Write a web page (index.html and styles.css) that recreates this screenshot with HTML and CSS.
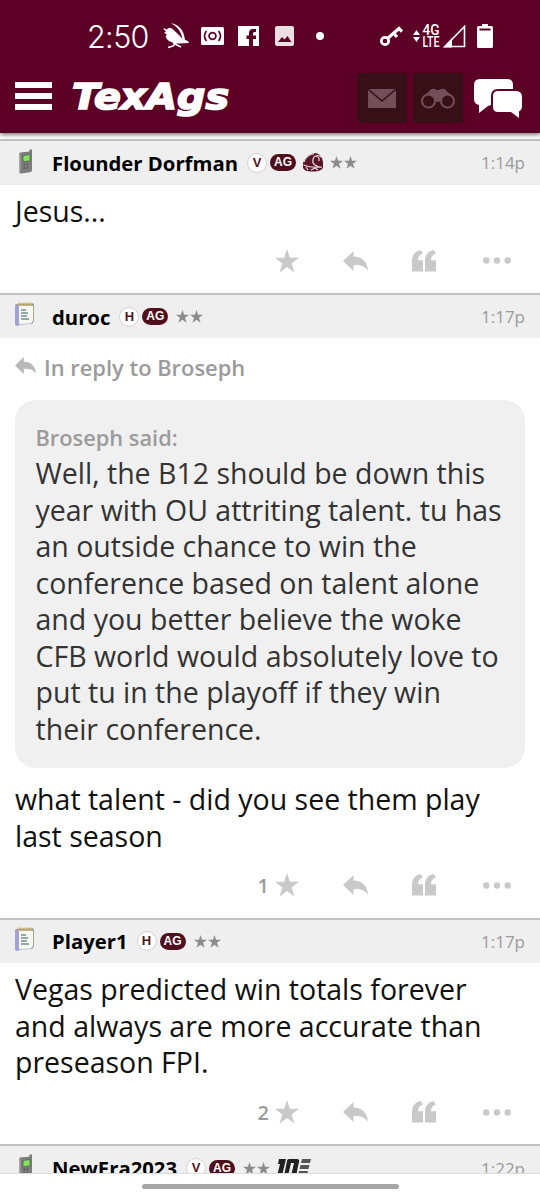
FILE: index.html
```
<!DOCTYPE html>
<html lang="en">
<head>
    <meta charset="UTF-8">
    <meta name="viewport" content="width=device-width, initial-scale=1.0">
    <title>TexAgs</title>
    <link rel="stylesheet" href="styles.css">
</head>
<body>

<!-- Shared icons -->
<svg class="sprite" width="0" height="0">
    <defs>
        <symbol id="star" viewBox="0 0 24 24">
            <path d="M12 0l2.900 8.800H24l-7.400 5.600 2.900 9.200-7.500-5.600-7.500 5.600 2.900-9.200L0 8.800h9.100z"/>
        </symbol>
        <symbol id="reply" viewBox="0 0 25 20">
            <path d="M0 10L10.500 0v5.500C19 5.500 24 10.500 25 19.500C21.500 14.800 17 13.600 10.500 14v6z"/>
        </symbol>
        <symbol id="quote" viewBox="0 0 24 22">
            <path d="M8.500 0L11 3.500C7.500 4.500 6 7 6 10.200H11V21.500H0V11.500C0 5.500 2.500 1.500 8.500 0zM21.500 0L24 3.500C20.500 4.500 19 7 19 10.200H24V21.500H13V11.500C13 5.500 15.500 1.500 21.500 0z"/>
        </symbol>
        <symbol id="dots" viewBox="0 0 28 7">
            <circle cx="3.300" cy="3.500" r="3.200"/><circle cx="14" cy="3.500" r="3.200"/><circle cx="24.700" cy="3.500" r="3.200"/>
        </symbol>
        <symbol id="phone" viewBox="0 0 16 25">
            <path d="M11.500 1q1.500-1.500 2.500 0V8h-2.500z" fill="#777"/>
            <path d="M2 3.500L12 2.500q2 0 2 2V21q0 2-2 2.300L3 24.500q-2 0-2-2V6q0-2 1-2.500z" fill="#7d7d7d"/>
            <path d="M2.500 4v19.500L1 22V6z" fill="#aaa"/>
            <path d="M5 6.500L12 5.500V12l-7 .8z" fill="#83e35c" stroke="#555" stroke-width=".7"/>
            <path d="M5.500 14.500h1.500v2H5.500zM8.500 14.300H10v2H8.500zM5.500 18H7v2H5.500zM8.500 17.800H10v2H8.500z" fill="#585858"/>
        </symbol>
        <symbol id="notepad" viewBox="0 0 20 26">
            <path d="M1 3L18 2.500q1 0 1 1V20l-2 3-11 .5L2 25Q0 25 0 23V5q0-2 1-2z" fill="#a3a1d2"/>
            <path d="M4 4h14v16L16 22.500 4 23z" fill="#f8f9f5"/>
            <path d="M2.500 2.500h15.500v2.300H2.500z" fill="#a99764"/>
            <path d="M4 1v4M7 1v4M10 1v4M13 1v4M16 1v4" stroke="#d5c28c" stroke-width="1"/>
            <path d="M6 9h5M6 12h7M6 15h6M6 18h8" stroke="#6f9089" stroke-width="1.300"/>
            <path d="M18.500 4v16l-2 3" fill="none" stroke="#aaa58e" stroke-width="1"/>
        </symbol>
    </defs>
</svg>

<div class="screen">
    <header class="top">
        <div class="status">
            <span class="clock">2:50</span>
            <svg class="bird" width="26" height="26" viewBox="0 0 26 26">
                <path d="M0 5L4 6.500Q6 3.500 9 5.500L16 12L19.500 16L25 18L26 20L16 20.500Q10 20.500 6 18Q3 16 2.500 13L4 12L1 9.500L3 9z" fill="#fff"/>
                <path d="M8 0C17 2 21 8 22 17L19.500 17C18.500 10 16 5 8 0z" fill="#fff"/>
                <path d="M14 19l-4 4-5 1.500M10 20l8 4" fill="none" stroke="#fff" stroke-width="1.500"/>
            </svg>
            <svg class="cast" width="23" height="18" viewBox="0 0 23 18">
                <rect width="23" height="18" rx="1.500" fill="#fff"/>
                <circle cx="11.500" cy="9" r="3.400" fill="none" stroke="#5c0025" stroke-width="1.800"/>
                <path d="M5.500 4q-4 5 0 10M17.500 4q4 5 0 10" fill="none" stroke="#5c0025" stroke-width="1.700"/>
            </svg>
            <svg class="facebook" width="21" height="20" viewBox="0 0 21 20">
                <path d="M0 0h21v20h-6v-7h3v-3.500h-3V7.500q0-1.500 1.500-1.500H18V3h-3q-4 0-4 4v2.500H8.500V13H11v7H0z" fill="#fff"/>
            </svg>
            <svg class="photo" width="19" height="20" viewBox="0 0 19 20">
                <rect width="19" height="20" rx="2" fill="#ebdfe4"/>
                <path d="M3 16l4-5 2.500 2.500L12.500 10l4 6z" fill="#5c0025"/>
            </svg>
            <span class="dot"></span>
            <svg class="key" width="23" height="21" viewBox="0 0 23 21">
                <circle cx="5" cy="15" r="3.700" fill="none" stroke="#fff" stroke-width="2.800"/>
                <path d="M8 12L19 2.500l3 3M14 7.500l3 3.500" fill="none" stroke="#fff" stroke-width="3.200"/>
            </svg>
            <svg class="updown" width="7" height="12" viewBox="0 0 7 12">
                <path d="M0 5l3.500-5L7 5zM0 7h7l-3.500 5z" fill="#fff"/>
            </svg>
            <svg class="lte" width="18" height="24" viewBox="0 0 18 24">
                <text x="0.500" y="11.200" textLength="17" lengthAdjust="spacingAndGlyphs">4G</text>
                <text x="0.500" y="22.800" textLength="17" lengthAdjust="spacingAndGlyphs">LTE</text>
            </svg>
            <svg class="signal" width="23" height="23" viewBox="0 0 23 23">
                <path d="M2 21.500L21.500 1.500v20z" fill="none" stroke="#fff" stroke-width="1.600"/>
                <path d="M0 22.500L9 13v9.500z" fill="#fff"/>
            </svg>
            <svg class="battery" width="16" height="24" viewBox="0 0 16 24">
                <path d="M5 0h6v2h3.500Q16 2 16 3.500v19q0 1.500-1.500 1.500h-13Q0 24 0 22.500v-19Q0 2 1.500 2H5z" fill="#fff"/>
                <path d="M2.500 4.500h11v2h-11z" fill="#5c0025"/>
            </svg>
        </div>

        <nav class="navbar">
            <div class="menu"><span></span><span></span><span></span></div>
            <svg class="logo" width="158" height="38" viewBox="0 0 158 38">
                <text x="-1" y="30" textLength="157" lengthAdjust="spacingAndGlyphs">TexAgs</text>
            </svg>
            <div class="nav-button">
                <svg width="28" height="19" viewBox="0 0 28 19">
                    <path d="M1 0h26L14 11zM0 1l14 12L28 1v18H0z"/>
                </svg>
            </div>
            <div class="nav-button">
                <svg width="34" height="21" viewBox="0 0 34 21">
                    <g class="lens"><circle cx="7.500" cy="13" r="6.500"/><circle cx="26.500" cy="13" r="6.500"/></g>
                    <path d="M4 7L10.500 1q3-1 5 1h3q2-2 5-1L30 7q-7-1-9.500 3-.5 4-3.500 4t-3.500-4Q11 6 4 7z"/>
                </svg>
            </div>
            <svg class="chat" width="48" height="39" viewBox="0 0 48 39">
                <path d="M6 0h27q6 0 6 6v4H24q-7 0-7 7v9l-3 1-9 7V26Q0 25 0 20V6Q0 0 6 0z"/>
                <path d="M24 12h18q6 0 6 6v9q0 4-3 5.500V39l-8-6H24q-5 0-5-5V17q0-5 5-5z"/>
            </svg>
        </nav>
    </header>

    <main class="feed">
        <article class="post">
            <div class="post-head">
                <svg class="device phone"><use href="#phone"/></svg>
                <span class="name">Flounder Dorfman</span>
                <span class="round">V</span><span class="pill">AG</span>
                <svg class="ring" width="21" height="19" viewBox="0 0 21 19">
                    <path d="M1 10Q5 0 14 0q6 2 7 9v6q-3 4-10 3.500Q3 19 1 15z" fill="#591629"/>
                    <path d="M2 9Q5 1 12 1M12 4q4-3 7 0M12 4q-3 5 1 8t7 2M1.500 12q7 3 18 2M4 14l2 3M9 17l4-2 3 2M13 3q5 0 4 5" fill="none" stroke="#ead9de" stroke-width="1.200"/>
                </svg>
                <span class="stars"><svg><use href="#star"/></svg><svg><use href="#star"/></svg></span>
                <span class="time">1:14p</span>
            </div>
            <p class="text">Jesus...</p>
            <div class="actions">
                <span class="count"></span>
                <svg class="like"><use href="#star"/></svg>
                <svg class="answer"><use href="#reply"/></svg>
                <svg class="cite"><use href="#quote"/></svg>
                <svg class="more"><use href="#dots"/></svg>
            </div>
        </article>

        <article class="post">
            <div class="post-head">
                <svg class="device"><use href="#notepad"/></svg>
                <span class="name">duroc</span>
                <span class="round">H</span><span class="pill">AG</span>
                <span class="stars"><svg><use href="#star"/></svg><svg><use href="#star"/></svg></span>
                <span class="time">1:17p</span>
            </div>
            <div class="reply-to">
                <svg><use href="#reply"/></svg>
                <span>In reply to Broseph</span>
            </div>
            <blockquote>
                <cite>Broseph said:</cite>
                <p>Well, the B12 should be down this<br>year with OU attriting talent. tu has<br>an outside chance to win the<br>conference based on talent alone<br>and you better believe the woke<br>CFB world would absolutely love to<br>put tu in the playoff if they win<br>their conference.</p>
            </blockquote>
            <p class="text after-quote">what talent - did you see them play<br>last season</p>
            <div class="actions">
                <span class="count">1</span>
                <svg class="like"><use href="#star"/></svg>
                <svg class="answer"><use href="#reply"/></svg>
                <svg class="cite"><use href="#quote"/></svg>
                <svg class="more"><use href="#dots"/></svg>
            </div>
        </article>

        <article class="post">
            <div class="post-head">
                <svg class="device"><use href="#notepad"/></svg>
                <span class="name">Player1</span>
                <span class="round">H</span><span class="pill">AG</span>
                <span class="stars"><svg><use href="#star"/></svg><svg><use href="#star"/></svg></span>
                <span class="time">1:17p</span>
            </div>
            <p class="text">Vegas predicted win totals forever<br>and always are more accurate than<br>preseason FPI.</p>
            <div class="actions">
                <span class="count">2</span>
                <svg class="like"><use href="#star"/></svg>
                <svg class="answer"><use href="#reply"/></svg>
                <svg class="cite"><use href="#quote"/></svg>
                <svg class="more"><use href="#dots"/></svg>
            </div>
        </article>

        <article class="post">
            <div class="post-head">
                <svg class="device phone"><use href="#phone"/></svg>
                <span class="name">NewEra2023</span>
                <span class="round">V</span><span class="pill">AG</span>
                <span class="stars"><svg><use href="#star"/></svg><svg><use href="#star"/></svg></span>
                <svg class="ten" width="34" height="18" viewBox="0 0 34 18">
                    <path d="M2 0h7L5 17H0l3-12H1zM12 0h8q3 0 2 3l-3 14h-5l3-13h-3l-3 13H7l3-15q0-2 2-2z" fill="#222"/>
                    <path d="M25 0h9l-1 4h-9zM23.500 6h9l-1 4h-9zM22 12h9l-1 4h-9z" fill="#555"/>
                </svg>
                <span class="time">1:22p</span>
            </div>
        </article>
    </main>

    <footer class="home"><span></span></footer>
</div>

</body>
</html>
```
FILE: styles.css
```
* {
    box-sizing: border-box;
}

body {
    margin: 0;
    font-family: "Open Sans", sans-serif;
    background-color: #fff;
    color: #111;
}

p, blockquote {
    margin: 0;
}

svg {
    display: block;
    flex-shrink: 0;
}

.sprite {
    display: none;
}

.screen {
    display: flex;
    flex-direction: column;
    width: 540px;
    height: 1200px;
    overflow: hidden;
}

/* Header */
.top {
    height: 133px;
    flex-shrink: 0;
    background-color: #5c0025;
    box-shadow: 0 2px 4px rgba(0, 0, 0, 0.5);
    z-index: 1;
}

.status {
    display: flex;
    align-items: center;
    height: 72px;
    padding-left: 87px;
    color: #fff;
}

.clock {
    width: 76px;
    padding-top: 1px;
    font: 300 30.5px Inter, sans-serif;
    letter-spacing: -0.6px;
}

.cast {
    margin-left: 12px;
}

.facebook {
    margin-left: 14px;
}

.photo {
    margin-left: 16px;
}

.dot {
    width: 8px;
    height: 8px;
    margin-left: 22px;
    border-radius: 50%;
    background-color: #fff;
}

.key {
    margin-left: 56px;
}

.updown {
    margin-left: 10px;
}

.lte {
    margin-left: 2px;
    overflow: visible;
}

.lte text {
    font: 500 14px Roboto, sans-serif;
    fill: #fff;
}

.signal {
    margin-left: 3px;
}

.battery {
    margin-left: 11px;
}

.navbar {
    display: flex;
    align-items: center;
    height: 52px;
    padding-left: 15px;
}

.menu {
    display: flex;
    flex-direction: column;
    gap: 5px;
    width: 37px;
    margin-top: -5px;
}

.menu span {
    height: 6px;
    background-color: #fff;
}

.logo {
    margin: 0 126px 0 21px;
    overflow: visible;
}

.logo text {
    font: italic bold 35px "DejaVu Sans", sans-serif;
    fill: #fff;
    stroke: #fff;
    stroke-width: 1.7px;
}

.nav-button {
    display: flex;
    align-items: center;
    justify-content: center;
    width: 50px;
    height: 50px;
    margin-right: 6px;
    border-radius: 3px;
    background-color: #371017;
}

.nav-button svg {
    fill: #735058;
}

.lens {
    fill: none;
    stroke: #735058;
    stroke-width: 2px;
}

.chat {
    margin-left: 5px;
    fill: #fff;
}

/* Posts */
.feed {
    flex: 1;
    min-height: 0;
    padding-top: 6px;
    overflow: hidden;
    border-bottom: 1px solid #ddd;
}

.post-head {
    display: flex;
    align-items: center;
    height: 45.5px;
    padding: 0 15px;
    border-top: 2px solid #c1c1c1;
    background-color: #efefef;
}

.device {
    width: 20px;
    height: 26px;
    margin: -5px 17px 0 0;
}

.phone {
    width: 16px;
    height: 25px;
    margin: -3px 18px 0 3px;
}

.name {
    margin-right: 9px;
    font-size: 20.3px;
    font-weight: 700;
    color: #000;
}

.round {
    width: 20px;
    height: 20px;
    margin-right: 3px;
    border: 1px solid #d5d0d1;
    border-radius: 50%;
    background-color: #fff;
    color: #521321;
    font: bold 13px/18px "Liberation Sans", sans-serif;
    text-align: center;
}

.pill {
    width: 26px;
    height: 17px;
    border-radius: 9px;
    background-color: #500f1d;
    color: #fff;
    font: bold 12px/17px "Liberation Sans", sans-serif;
    text-align: center;
}

.ring {
    margin: 0 -1px 0 6px;
}

.stars {
    display: flex;
    gap: 1px;
    margin-left: 8px;
}

.stars svg {
    width: 13px;
    height: 13px;
    fill: #8c8c8c;
}

.ten {
    margin: -1px 0 0 7px;
}

.time {
    margin-left: auto;
    font-size: 17px;
    color: #9b9b9b;
}

.text {
    padding: 8.3px 15px 0;
    font-size: 28.5px;
    line-height: 36.5px;
}

.after-quote {
    padding-top: 13.3px;
}

.reply-to {
    display: flex;
    align-items: center;
    gap: 8px;
    height: 62px;
    padding: 0 0 4px 15px;
    color: #9b9b9b;
    font-size: 21.9px;
    font-weight: 600;
}

.reply-to svg {
    width: 21px;
    height: 17px;
    margin-top: -4px;
    fill: #b9b9b9;
}

blockquote {
    height: 367.5px;
    margin: 0 15px;
    padding: 21px 0 0 20.5px;
    border-radius: 21px;
    background-color: #f0f0f0;
    color: #333;
    font-size: 28.5px;
    line-height: 36.5px;
}

cite {
    display: block;
    height: 34px;
    color: #9b9b9b;
    font-size: 21.8px;
    font-style: normal;
    font-weight: 600;
    line-height: 34px;
}

.actions {
    display: flex;
    align-items: center;
    justify-content: flex-end;
    height: 63.5px;
    padding: 0 29px 1px 0;
    fill: #c9c9c9;
}

.count {
    margin-right: 6px;
    color: #9b9b9b;
    font-size: 20px;
    font-weight: 600;
}

.like {
    width: 24px;
    height: 24px;
}

.answer {
    width: 25px;
    height: 20px;
    margin-left: 44px;
}

.cite {
    width: 24px;
    height: 22px;
    margin-left: 44px;
}

.more {
    width: 28px;
    height: 7px;
    margin-left: 47px;
}

/* Gesture bar */
.home {
    display: flex;
    justify-content: center;
    height: 26px;
    flex-shrink: 0;
    padding-top: 10px;
    background-color: #fff;
}

.home span {
    width: 257px;
    height: 5px;
    border-radius: 3px;
    background-color: #a6a6a6;
}
```
